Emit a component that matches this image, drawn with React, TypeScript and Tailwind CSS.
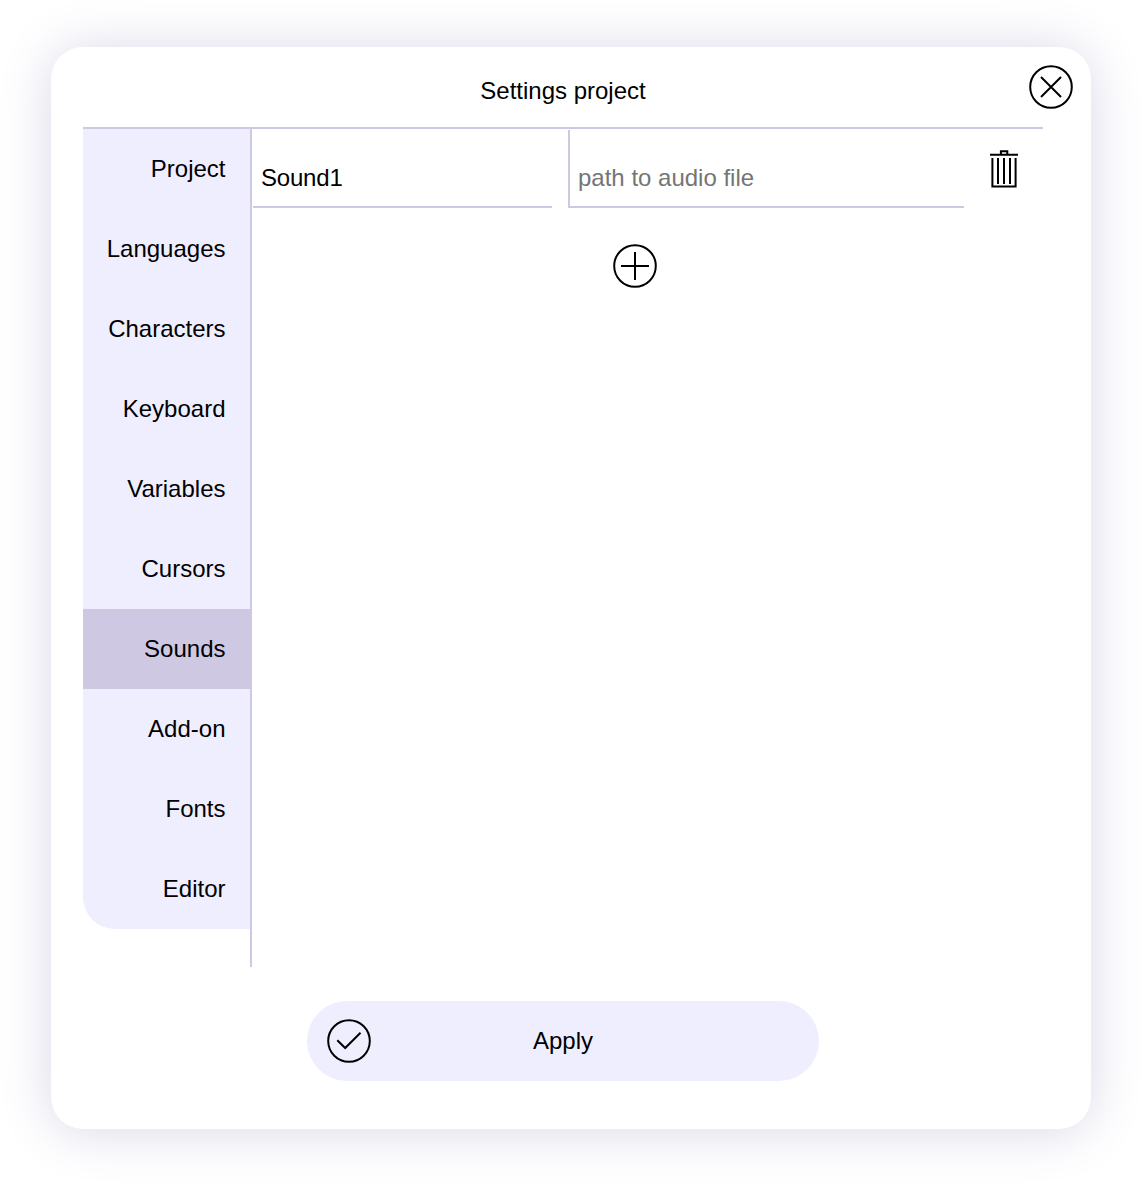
import React from "react";

const sections = ["Project", "Languages", "Characters", "Keyboard", "Variables", "Cursors", "Sounds", "Add-on", "Fonts", "Editor"];

function CircleIcon({ d }: { d: string }) {
  return (
    <svg width="44" height="44" viewBox="0 0 44 44" fill="none" stroke="#000" strokeWidth="2" className="block shrink-0">
      <circle cx="22" cy="22" r="20.8" />
      <path d={d} />
    </svg>
  );
}

function TrashIcon() {
  return (
    <svg width="28" height="38" viewBox="0 0 28 38" fill="none" stroke="#000" strokeWidth="2" className="block">
      <path d="M0 4.7H28M10.9 4.7V1.3H17.3V4.7" />
      <path d="M2.4 8V36.6H25.6V8M8 8V34M14 8V34M20 8V34" />
    </svg>
  );
}

export default function App() {
  return (
    <div className="h-[1184px] w-[1142px] overflow-hidden bg-white pl-[51px] pt-[47px] font-['Liberation_Sans',Arial,sans-serif] text-2xl leading-8 text-black">
      <div className="relative flex h-[1082px] w-[1040px] flex-col rounded-[32px] bg-white px-8 shadow-[0_2px_54px_#dad7e7]">
        <button aria-label="Close" className="absolute right-[18px] top-[18px]">
          <CircleIcon d="M12 12L32 32M32 12L12 32" />
        </button>
        <header className="h-[82px] w-[960px] border-b-2 border-[#cec8e2] pt-7 text-center">Settings project</header>
        <div className="flex h-[838px] w-[960px]">
          <nav className="h-full w-[169px] shrink-0 border-r-2 border-[#cec8e2]">
            <ul className="overflow-hidden rounded-bl-[32px] bg-[#efeeff]">
              {sections.map((name) => (
                <li key={name} className={`flex h-20 items-center justify-end pr-[24.5px] ${name === "Sounds" ? "bg-[#cec8e2]" : ""}`}>
                  {name}
                </li>
              ))}
            </ul>
          </nav>
          <main className="flex-1 pl-px pt-px">
            <div className="flex h-[78px]">
              <input defaultValue="Sound1" className="w-[299px] border-b-2 border-[#cec8e2] px-2 pt-5 tracking-[-0.2px] outline-none" />
              <input placeholder="path to audio file" className="ml-4 w-[396px] border-b-2 border-l-2 border-[#cec8e2] px-2 pt-5 outline-none placeholder:text-[#757575]" />
              <button aria-label="Delete sound" className="ml-[26px] mt-5 self-start">
                <TrashIcon />
              </button>
            </div>
            <button aria-label="Add sound" className="ml-[360px] mt-9 block">
              <CircleIcon d="M8 22H36M22 8V36" />
            </button>
          </main>
        </div>
        <button className="relative ml-56 mt-[34px] flex h-20 w-[512px] items-center justify-center rounded-full bg-[#efeeff]">
          <span className="absolute left-5">
            <CircleIcon d="M10.3 21.3L18.2 29L33.5 13.8" />
          </span>
          Apply
        </button>
      </div>
    </div>
  );
}
